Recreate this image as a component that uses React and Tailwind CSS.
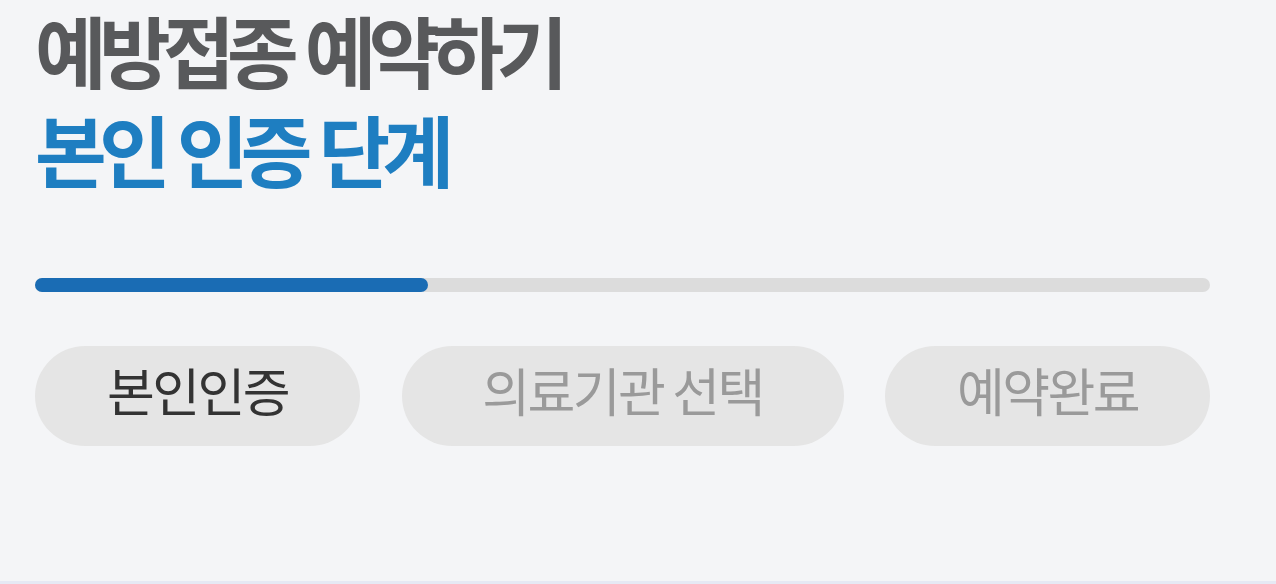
import React from 'react'

const steps = [
  { label: '본인인증', active: true, w: 'w-[325px]' },
  { label: '의료기관 선택', active: false, w: 'w-[442px]' },
  { label: '예약완료', active: false, w: 'w-[325px]' },
]

export default function App() {
  return (
    <div
      className="h-[584px] w-full bg-[#f4f5f7] border-b-[3px] border-[#e6e9f4]"
      style={{ fontFamily: '"Noto Sans CJK KR", "Noto Sans", sans-serif' }}
    >
      <div className="pl-[35px] pr-[66px]">
        <h1 className="text-[78px] font-bold leading-[98px] tracking-[-0.1em] [word-spacing:0.05em] text-[#58595b]">
          예방접종 예약하기
        </h1>
        <h2 className="text-[78px] font-bold leading-[100px] tracking-[-0.1em] [word-spacing:0.05em] text-[#1e7ec1]">
          본인 인증 단계
        </h2>

        {/* progress */}
        <div className="mt-[80px] h-[14px] w-full rounded-full bg-[#dcdcdc]">
          <div className="h-full w-[393px] rounded-full bg-[#1a6cb4]" />
        </div>

        <div className="mt-[54px] flex justify-between">
          {steps.map((s) => (
            <div
              key={s.label}
              className={`${s.w} flex h-[100px] items-center justify-center rounded-full bg-[#e5e5e5] pb-[12px] text-[52px] font-normal tracking-[-0.05em] ${
                s.active ? 'text-[#333333]' : 'text-[#9a9a9a]'
              }`}
            >
              {s.label}
            </div>
          ))}
        </div>
      </div>
    </div>
  )
}
